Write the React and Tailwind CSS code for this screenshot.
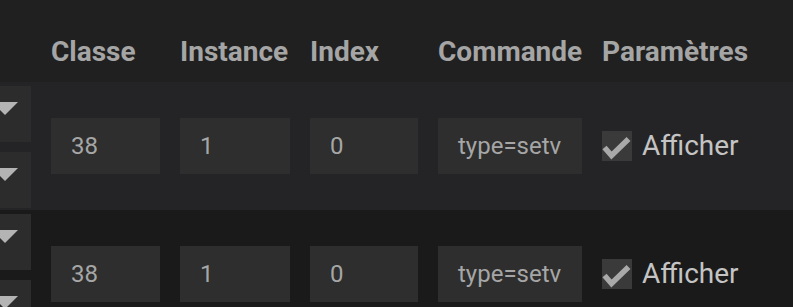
import React from "react";

const cols = "grid grid-cols-[31px_109px_110px_108px_144px_1fr] gap-x-[20px]";

function Arrow() {
  return (
    <div className="relative h-[56px] w-[31px] overflow-hidden bg-[#2c2c2c]">
      <svg className="absolute left-[-8px] top-[16px]" width="26" height="13" viewBox="0 0 26 13">
        <polygon points="0,0 26,0 13,13" fill="#b4b4b4" />
      </svg>
    </div>
  );
}

function Input({ value }) {
  return (
    <div className="flex h-[56px] items-center overflow-hidden whitespace-nowrap bg-[#2e2e2e] pl-[20px] text-[24px] text-[#a6a6a6]">
      {value}
    </div>
  );
}

function Row({ bg }) {
  return (
    <div className={`${cols} h-[128px] items-center ${bg}`}>
      <div className="flex flex-col gap-[10px] pt-[2px]">
        <Arrow />
        <Arrow />
      </div>
      <Input value="38" />
      <Input value="1" />
      <Input value="0" />
      <Input value="type=setv" />
      <div className="flex items-center gap-[10px]">
        <div className="relative h-[30px] w-[30px] bg-[#3a3a3a]">
          <svg className="absolute left-0 top-0" width="30" height="30" viewBox="0 0 30 30">
            <path d="M2.5 16.5 L9.5 24.5 L26.5 8" fill="none" stroke="#a9a9a9" strokeWidth="5.5" strokeLinejoin="miter" />
          </svg>
        </div>
        <span className="text-[28px] leading-[30px] text-[#c4c4c4]">Afficher</span>
      </div>
    </div>
  );
}

export default function App() {
  return (
    <div className="h-[307px] w-[793px] overflow-hidden bg-[#1a1a1a]" style={{ fontFamily: "Roboto, 'Noto Sans', sans-serif" }}>
      <div className={`${cols} h-[82px] bg-[#202020] pt-[38px] text-[28px] font-bold leading-[28px] text-[#a5a5a5]`}>
        <div />
        <div>Classe</div>
        <div>Instance</div>
        <div>Index</div>
        <div>Commande</div>
        <div>Paramètres</div>
      </div>
      <Row bg="bg-[#242426]" />
      <Row bg="bg-[#1a1a1a]" />
    </div>
  );
}
